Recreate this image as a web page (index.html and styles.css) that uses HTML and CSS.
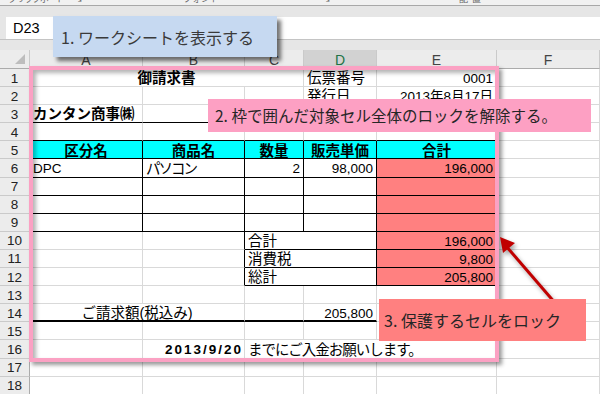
FILE: index.html
```html
<!DOCTYPE html>
<html lang="ja">
<head>
<meta charset="utf-8">
<title>御請求書</title>
<link rel="stylesheet" href="styles.css">
</head>
<body>
<div class="app">
  <div class="ribbon">
    <div class="ribbon-labels">
      <span class="rl rl-clip">クリップボード</span>
      <span class="rl rl-l1">↘</span>
      <span class="rl rl-font">フォント</span>
      <span class="rl rl-l2">↘</span>
      <span class="rl rl-align">配置</span>
    </div>
  </div>
  <div class="rgap"></div>
  <div class="fbar">
    <div class="namebox">D23</div>
    <div class="formula"></div>
  </div>
  <div class="fgap"></div>
  <div class="sheet">
    <div class="h corner"><svg width="12" height="12" viewBox="0 0 12 12"><polygon points="1,11 11,1 11,11" fill="#bdbdbd"/></svg></div>
    <div class="h">A</div><div class="h">B</div><div class="h">C</div><div class="h sel">D</div><div class="h">E</div><div class="h">F</div>

    <div class="rh">1</div>
    <div class="c s3 ctr b">御請求書</div>
    <div class="c">伝票番号</div>
    <div class="c r n">0001</div>
    <div class="c"></div>

    <div class="rh">2</div>
    <div class="c"></div><div class="c"></div><div class="c"></div>
    <div class="c">発行日</div>
    <div class="c r n">2013年8月17日</div>
    <div class="c"></div>

    <div class="rh">3</div>
    <div class="c b bb">カンタン商事㈱</div>
    <div class="c bb"></div><div class="c"></div><div class="c"></div><div class="c"></div><div class="c"></div>

    <div class="rh">4</div>
    <div class="c bb"></div><div class="c bb"></div><div class="c bb"></div><div class="c bb"></div><div class="c bb"></div><div class="c"></div>

    <div class="rh">5</div>
    <div class="c hd">区分名</div>
    <div class="c hd">商品名</div>
    <div class="c hd">数量</div>
    <div class="c hd">販売単価</div>
    <div class="c hd">合計</div>
    <div class="c"></div>

    <div class="rh">6</div>
    <div class="c bx n">DPC</div>
    <div class="c bx kana">パソコン</div>
    <div class="c bx r n">2</div>
    <div class="c bx r n">98,000</div>
    <div class="c bx sa r n">196,000</div>
    <div class="c"></div>

    <div class="rh">7</div>
    <div class="c bx"></div><div class="c bx"></div><div class="c bx"></div><div class="c bx"></div><div class="c bx sa"></div><div class="c"></div>
    <div class="rh">8</div>
    <div class="c bx"></div><div class="c bx"></div><div class="c bx"></div><div class="c bx"></div><div class="c bx sa"></div><div class="c"></div>
    <div class="rh">9</div>
    <div class="c bx"></div><div class="c bx"></div><div class="c bx"></div><div class="c bx"></div><div class="c bx sa"></div><div class="c"></div>

    <div class="rh">10</div>
    <div class="c"></div><div class="c br"></div>
    <div class="c bx s2">合計</div>
    <div class="c bx sa r n">196,000</div>
    <div class="c"></div>

    <div class="rh">11</div>
    <div class="c"></div><div class="c br"></div>
    <div class="c bx s2">消費税</div>
    <div class="c bx sa r n">9,800</div>
    <div class="c"></div>

    <div class="rh">12</div>
    <div class="c"></div><div class="c br"></div>
    <div class="c bx s2">総計</div>
    <div class="c bx sa r n">205,800</div>
    <div class="c"></div>

    <div class="rh">13</div>
    <div class="c"></div><div class="c"></div><div class="c"></div><div class="c"></div><div class="c"></div><div class="c"></div>

    <div class="rh">14</div>
    <div class="c s2 ctr thick">ご請求額(税込み)</div>
    <div class="c thick"></div>
    <div class="c thick r n">205,800</div>
    <div class="c"></div><div class="c"></div>

    <div class="rh">15</div>
    <div class="c"></div><div class="c"></div><div class="c"></div><div class="c"></div><div class="c"></div><div class="c"></div>

    <div class="rh">16</div>
    <div class="c"></div>
    <div class="c r n b date"><span>2013/9/20</span></div>
    <div class="c s3 tight">までにご入金お願いします。</div>
    <div class="c"></div>

    <div class="rh">17</div>
    <div class="c"></div><div class="c"></div><div class="c"></div><div class="c"></div><div class="c"></div><div class="c"></div>
    <div class="rh">18</div>
    <div class="c"></div><div class="c"></div><div class="c"></div><div class="c"></div><div class="c"></div><div class="c"></div>
  </div>

  <div class="frame"></div>
  <svg class="arrow" width="600" height="394" viewBox="0 0 600 394">
    <line x1="556" y1="304" x2="506" y2="246" stroke="#c00000" stroke-width="3"/>
    <polygon points="500,237 515,243 503,253" fill="#c00000"/>
  </svg>
  <div class="callout c1">1. ワークシートを表示する</div>
  <div class="callout c2">2. 枠で囲んだ対象セル全体のロックを解除する。</div>
  <div class="callout c3">3. 保護するセルをロック</div>
</div>
</body>
</html>
```

FILE: styles.css
```css
* { box-sizing: border-box; }
html, body { margin: 0; padding: 0; }
body {
  width: 600px;
  height: 394px;
  overflow: hidden;
  background: #fff;
  font-family: "Liberation Sans", "Noto Sans CJK JP", sans-serif;
}
.app {
  position: relative;
  width: 600px;
  height: 394px;
  overflow: hidden;
  background: #e6e6e6;
}
.ribbon {
  height: 6px;
  border-bottom: 1px solid #a8a8a8;
  background: #f1f1f1;
  overflow: hidden;
}
.ribbon-labels {
  display: flex;
  margin-top: -7px;
  height: 12px;
}
.rl {
  font-family: "Noto Sans CJK JP", sans-serif;
  font-size: 9px;
  line-height: 12px;
  color: #666;
  white-space: nowrap;
}
.rl-clip { margin-left: 8px; letter-spacing: -1px; }
.rl-l1 { margin-left: 10px; }
.rl-font { margin-left: 100px; }
.rl-l2 { margin-left: 103px; }
.rl-align { margin-left: 128px; letter-spacing: 4px; }
.rgap { height: 10px; }
.fbar {
  height: 24px;
  display: flex;
  padding-top: 1px;
  border-bottom: 1px solid #c4c4c4;
}
.namebox {
  margin-left: 6px;
  width: 48px;
  background: #fff;
  font-size: 14.5px;
  color: #000;
  padding-left: 7px;
  display: flex;
  align-items: center;
}
.formula {
  flex: 1;
  margin-left: 90px;
  background: #fff;
}
.fgap { height: 10px; }
.sheet {
  display: grid;
  grid-template-columns: 30px 113px 102px 59px 73px 120px 103px;
  grid-template-rows: 19px repeat(18, 18.1px);
  background: #fff;
}
.h {
  background: #ececec;
  border-right: 1px solid #cacaca;
  border-bottom: 1px solid #ababab;
  color: #444;
  font-size: 14px;
  padding-top: 2px;
  display: flex;
  align-items: center;
  justify-content: center;
}
.h.sel { background: #d2d2d2; color: #217346; }
.corner { justify-content: flex-end; align-items: flex-end; padding: 0 3px 3px 0; }
.corner svg { display: block; }
.rh {
  background: #ececec;
  border-right: 1px solid #ababab;
  border-bottom: 1px solid #cacaca;
  color: #222;
  font-size: 13.5px;
  padding-top: 1px;
  display: flex;
  align-items: center;
  justify-content: center;
}
.c {
  border-right: 1px solid #d9d9d9;
  border-bottom: 1px solid #d9d9d9;
  padding: 2px 3px 0;
  display: flex;
  align-items: center;
  white-space: nowrap;
  font-size: 14.5px;
  line-height: 1;
  color: #000;
  min-width: 0;
}
.s2 { grid-column: span 2; }
.s3 { grid-column: span 3; }
.ctr { justify-content: center; }
.r { justify-content: flex-end; }
.b { font-weight: 700; }
.n { font-size: 13.5px; }
.bb { border-bottom-color: #000; }
.br { border-right-color: #000; }
.bx { border-bottom-color: #000; border-right-color: #000; }
.hd {
  background: #00ffff;
  font-weight: 700;
  justify-content: center;
  border-bottom-color: #000;
  border-right-color: #000;
}
.sa { background: #ff8080; }
.thick { border-bottom: 2px solid #000; }
.kana { letter-spacing: -2px; }
.tight { letter-spacing: -1px; }
.date span { letter-spacing: 2px; margin-right: -2px; }
.frame {
  position: absolute;
  left: 29px;
  top: 66px;
  width: 470px;
  height: 296px;
  border: 4px solid #fba1c3;
  box-shadow: 3px 3px 4px rgba(0, 0, 0, 0.4), inset 3px 3px 4px rgba(0, 0, 0, 0.3);
  pointer-events: none;
}
.arrow {
  position: absolute;
  left: 0;
  top: 0;
  filter: drop-shadow(2px 3px 2px rgba(0, 0, 0, 0.35));
}
.callout {
  position: absolute;
  display: flex;
  align-items: center;
  white-space: nowrap;
  font-family: "Noto Sans CJK JP", sans-serif;
  color: #262626;
  line-height: 1;
}
.c1 {
  left: 53px;
  top: 16px;
  width: 224px;
  height: 41px;
  background: #c6d9f1;
  padding-left: 8px;
  font-size: 16px;
  color: #3a3a3a;
  box-shadow: 4px 4px 4px rgba(0, 0, 0, 0.55);
}
.c2 {
  left: 208px;
  top: 99px;
  width: 383px;
  height: 33px;
  background: #fda0c3;
  padding-left: 7px;
  font-size: 15.5px;
}
.c3 {
  left: 379px;
  top: 299px;
  width: 207px;
  height: 42px;
  background: #ff8080;
  padding-left: 5px;
  font-size: 16px;
}
```
